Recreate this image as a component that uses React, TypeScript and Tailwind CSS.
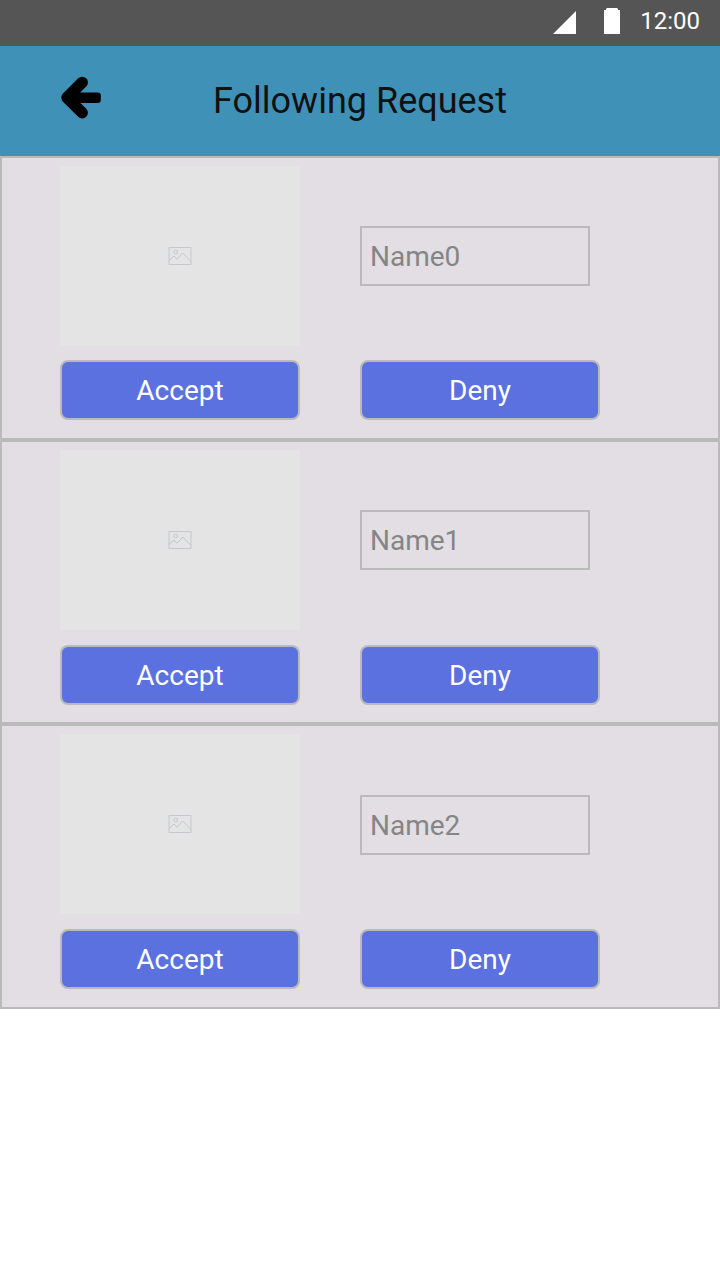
const names = ["Name0", "Name1", "Name2"];

function StatusBar() {
  return (
    <div className="flex h-[46px] items-start justify-end bg-[#555555] pr-5 text-white">
      <svg className="mt-[11px] h-[23px] w-[23px]" viewBox="0 0 23 23" fill="currentColor">
        <path d="M23 0V23H0Z" />
      </svg>
      <svg className="mt-2 ml-7 h-[26px] w-4" viewBox="0 0 16 26" fill="currentColor">
        <path d="M2 1L3 0H13L14 1V2H16V26H0V2H2Z" />
      </svg>
      <span className="ml-5 pt-[5px] text-[24px] leading-8">12:00</span>
    </div>
  );
}

function BackArrow() {
  return (
    <svg className="h-11 w-11" viewBox="60 76 44 44" fill="none" stroke="black" strokeLinecap="round" strokeLinejoin="round">
      <path d="M82.2 82.4L67 97.6L82.2 112.8" strokeWidth="11.4" />
      <path d="M67 97.6L78 88V107Z" fill="black" stroke="none" />
      <rect x="68" y="92.4" width="32.8" height="10.6" rx="3" fill="black" stroke="none" />
    </svg>
  );
}

function Placeholder() {
  return (
    <div className="flex h-[180px] w-60 items-center justify-center bg-[#e4e4e4]">
      <svg className="h-[18px] w-6" viewBox="0 0 24 18" fill="none" stroke="#c5c7cc" strokeWidth="1">
        <rect x="1" y="0.5" width="22" height="17" />
        <circle cx="7.7" cy="5" r="1.9" />
        <path d="M1 13.5L6 9L9 12.3L14.7 6L23 14.5" />
      </svg>
    </div>
  );
}

function ActionButton({ label }: { label: string }) {
  return (
    <button className="h-[60px] w-60 rounded-lg border-2 border-[#bababa] bg-[#5b71e0] pt-0.5 text-[28px] leading-8 text-white">
      {label}
    </button>
  );
}

function RequestRow({ name }: { name: string }) {
  return (
    <section className="h-[284.2px] border-2 border-[#bababa] bg-[#e2dee3] pt-2 pl-[58px]">
      <div className="flex items-center gap-[60px]">
        <Placeholder />
        <div className="mt-[0.4px] flex h-[60px] w-[230px] items-center border-2 border-[#bababa] pt-0.5 pl-2 text-[28px] leading-8 text-[#858585]">
          {name}
        </div>
      </div>
      <div className="mt-[14.4px] flex gap-[60px]">
        <ActionButton label="Accept" />
        <ActionButton label="Deny" />
      </div>
    </section>
  );
}

export default function App() {
  return (
    <main className="h-[1280px] w-[720px] overflow-hidden bg-white font-['Roboto',sans-serif]">
      <StatusBar />
      <header className="grid h-[110px] grid-cols-[160px_400px_160px] items-center bg-[#4091b7]">
        <button className="-mt-1.5 ml-[60px] w-11" aria-label="Back">
          <BackArrow />
        </button>
        <h1 className="text-center text-[36px] leading-[44px] text-[#111111]">Following Request</h1>
      </header>
      {names.map((name) => (
        <RequestRow key={name} name={name} />
      ))}
    </main>
  );
}
